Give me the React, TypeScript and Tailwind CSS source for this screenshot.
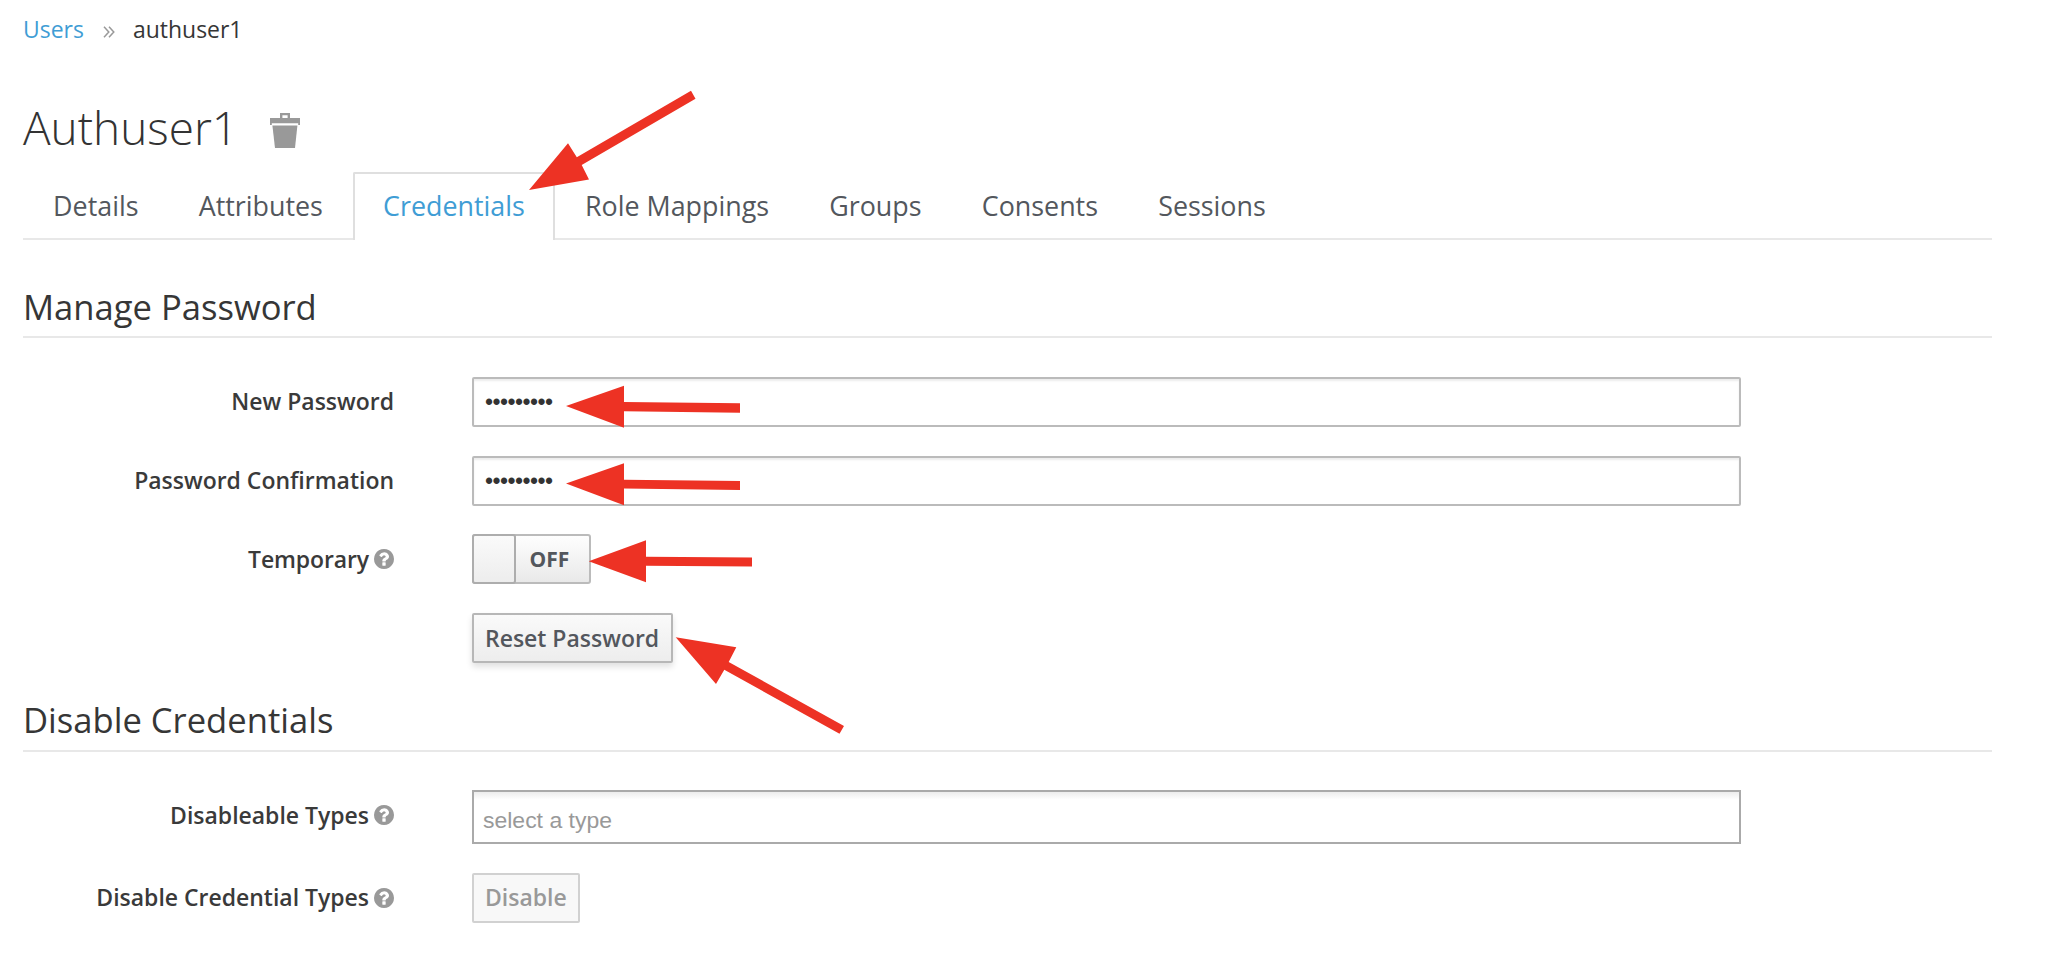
import type { ReactNode } from "react";

const tabs = ["Details", "Attributes", "Credentials", "Role Mappings", "Groups", "Consents", "Sessions"];

const arrows = [
  "529,190 568,143.3 576.8,157.3 691,90.7 695.5,98.7 581.7,165 589,179.6",
  "566,406 624,385.7 624,402 740,403.3 740,412.7 624,411.2 624,427.7",
  "566,483.5 624,463.3 624,479.7 740,481 740,490 624,488.5 624,505.2",
  "588.7,561.3 646,540.3 646,556.8 752,557.5 752,566.5 646,565.8 646,582.3",
  "675.7,637.3 736.3,647.3 728.7,662 844,726 839.5,733.7 724.3,669.7 716,684",
];

function TrashIcon() {
  return (
    <svg className="h-[36px] w-[30px]" viewBox="0 0 30 36" fill="#999999">
      <path fillRule="evenodd" d="M10 0H20V5H30V12H28.2V10.2H1.8V12H0V5H10ZM12.4 2.2V5H17.6V2.2Z" />
      <path d="M2.4 12.6H27.4L25 35H5Z" />
    </svg>
  );
}

function HelpIcon() {
  return (
    <svg className="h-[20px] w-[20px]" viewBox="0 0 1536 1536" fill="#999999">
      <path d="M896 1248v-192q0-14-9-23t-23-9H672q-14 0-23 9t-9 23v192q0 14 9 23t23 9h192q14 0 23-9t9-23zm256-672q0-88-55.500-163T958 297t-170-41q-243 0-371 213-15 24 8 42l132 100q7 6 19 6 16 0 25-12 53-68 86-92 34-24 86-24 48 0 85.500 26t37.500 59q0 38-20 61t-68 45q-63 28-115.500 86.500T640 892v36q0 14 9 23t23 9h192q14 0 23-9t9-23q0-19 21.500-49.500T972 829q32-18 49-28.500t46-35 44.500-48 28-60.500 12.500-81zm384 192q0 209-103 385.500T1153.500 1433 768 1536t-385.500-103T103 1153.500 0 768t103-385.500T382.500 103 768 0t385.500 103T1433 382.500 1536 768z" />
    </svg>
  );
}

function Legend({ children, className }: { children: ReactNode; className: string }) {
  return (
    <h2 className={`flex items-center border-b-2 border-[#e8e8e8] text-[34.6px] text-[#363636] ${className}`}>
      {children}
    </h2>
  );
}

type RowProps = { label?: string; labelClass?: string; help?: boolean; className: string; children: ReactNode };

function Row({ label, labelClass, help, className, children }: RowProps) {
  return (
    <div className={`flex ${className}`}>
      <div className="flex h-[50px] w-[371px] shrink-0 items-center justify-end gap-[5px] text-[22.97px] font-semibold text-[#3a3a3a]">
        {label && <label className={labelClass}>{label}</label>}
        {help && <HelpIcon />}
      </div>
      <div className="ml-[78px] w-[1269px]">{children}</div>
    </div>
  );
}

function PasswordField() {
  return (
    <div className="flex h-[50px] items-center rounded-[2px] border-2 border-[#bbbbbb] pl-[11px] font-['Liberation_Sans',sans-serif] text-[23px] leading-none tracking-[-0.55px] text-[#333333] shadow-[inset_0_2px_2px_rgba(0,0,0,0.075)]">
      •••••••••
    </div>
  );
}

export default function App() {
  return (
    <div className="relative h-[966px] w-full overflow-hidden bg-white pl-[23px] font-['Open_Sans',sans-serif]">
      <main className="w-[1969px]">
        <nav className="flex h-[58px] items-center text-[22.97px]">
          <a className="text-[#3f9dd5]">Users</a>
          <svg className="mt-[5px] ml-[19px] h-[12px] w-[12px]" viewBox="0 0 12 12" fill="none" stroke="#999999" strokeWidth="1.5">
            <path d="M1 .8 5.800 6 1 11.200M6 .8 10.800 6 6 11.200" />
          </svg>
          <span className="ml-[18px] text-[#363636]">authuser1</span>
        </nav>

        <h1 className="mt-[24px] flex h-[90px] items-center text-[45.94px] font-light text-[#333333]">
          Authuser1
          <span className="mt-[7px] ml-[32px]">
            <TrashIcon />
          </span>
        </h1>

        <ul className="flex h-[68px] border-b-2 border-[#e8e8e8] text-[26.85px] text-[#53575d]">
          {tabs.map((tab) => (
            <li
              key={tab}
              className={
                tab === "Credentials"
                  ? "flex h-[68px] items-center rounded-t-[2px] border-2 border-b-0 border-[#dfdfdf] bg-white px-[28.1px] pb-[2px] text-[#3f9dd5]"
                  : "flex h-[68px] items-center border-2 border-b-0 border-transparent px-[28.1px] pb-[2px]"
              }
            >
              {tab}
            </li>
          ))}
        </ul>

        <section>
          <Legend className="mt-[37px] h-[61px]">Manage Password</Legend>
          <Row label="New Password" labelClass="pb-[1px]" className="mt-[39px]">
            <PasswordField />
          </Row>
          <Row label="Password Confirmation" labelClass="pb-[1px]" className="mt-[29px]">
            <PasswordField />
          </Row>
          <Row label="Temporary" labelClass="pt-[1px] tracking-[-0.1px]" help className="mt-[28px]">
            <div className="flex h-[50px] w-[119px] rounded-[3px] border-2 border-[#bbbbbb] bg-linear-to-b from-[#fefefe] to-[#e9e9e9] text-[21px] font-bold text-[#53575d]">
              <span className="-my-[2px] -ml-[2px] w-[44px] rounded-[3px] border-2 border-[#adadad] bg-linear-to-b from-[#fafafa] to-[#ededed]" />
              <span className="flex flex-1 items-center justify-center pt-[2px] pr-[6px]">OFF</span>
            </div>
          </Row>
          <Row className="mt-[29px]">
            <button className="flex h-[50px] items-center rounded-[2px] border-2 border-[#b7b7b7] bg-linear-to-b from-[#fafafa] to-[#ededed] pt-[1px] pr-[12px] pl-[11px] text-[22.97px] font-semibold text-[#53575d] shadow-[0_4px_6px_rgba(3,3,3,0.12)]">
              Reset Password
            </button>
          </Row>
        </section>

        <section>
          <Legend className="mt-[27px] h-[62px]">Disable Credentials</Legend>
          <Row label="Disableable Types" labelClass="pt-[1px]" help className="mt-[38px]">
            <div className="flex h-[54px] items-center border-2 border-[#aaaaaa] bg-linear-to-b from-[#eeeeee] from-1% to-white to-15% pt-[7px] pl-[9px] font-['Liberation_Sans',sans-serif] text-[22.97px] text-[#999999]">
              select a type
            </div>
          </Row>
          <Row label="Disable Credential Types" labelClass="pb-[1px]" help className="mt-[29px]">
            <button className="flex h-[50px] items-center rounded-[2px] border-2 border-[#d1d1d1] bg-[#f8f8f8] px-[11px] pb-[1px] text-[22.97px] font-semibold text-[#999999]">
              Disable
            </button>
          </Row>
        </section>
      </main>

      <svg className="pointer-events-none absolute top-0 left-0 h-[966px] w-[2068px]" viewBox="0 0 2068 966" fill="#ed3224">
        {arrows.map((points) => (
          <polygon key={points} points={points} />
        ))}
      </svg>
    </div>
  );
}
